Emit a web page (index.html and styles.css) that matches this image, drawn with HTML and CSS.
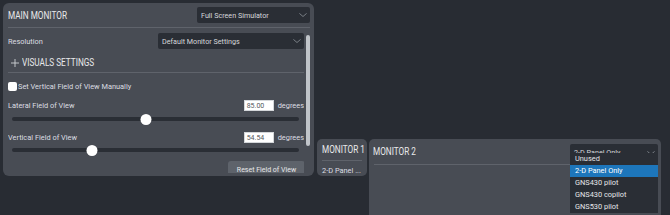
FILE: index.html
```html
<!DOCTYPE html>
<html lang="en">
<head>
<meta charset="utf-8">
<title>Monitor Configuration</title>
<link rel="stylesheet" href="styles.css">
</head>
<body>
<div class="desk">
  <section class="panel main">
    <header class="phead">
      <h1 class="ptitle">MAIN MONITOR</h1>
      <div class="select sel-mode">
        <span>Full Screen Simulator</span>
        <svg class="chev" viewBox="0 0 8 4"><path d="M0.4 0.4 L4 3.5 L7.6 0.4"/></svg>
      </div>
    </header>
    <div class="pbody">
      <div class="content">
        <div class="row res">
          <span class="label">Resolution</span>
          <div class="select sel-res">
            <span>Default Monitor Settings</span>
            <svg class="chev" viewBox="0 0 8 4"><path d="M0.4 0.4 L4 3.5 L7.6 0.4"/></svg>
          </div>
        </div>
        <div class="section">
          <svg class="plus" viewBox="0 0 8 8"><path d="M4 0 V8 M0 4 H8"/></svg>
          <h2 class="ptitle">VISUALS SETTINGS</h2>
        </div>
        <label class="check"><span class="box"></span><span>Set Vertical Field of View Manually</span></label>
        <div class="row field">
          <span class="label">Lateral Field of View</span>
          <span class="num"><span class="input">85.00</span><span>degrees</span></span>
        </div>
        <div class="slider">
          <div class="track"></div>
          <div class="thumb" style="left:46.7%"></div>
        </div>
        <div class="row field field2">
          <span class="label">Vertical Field of View</span>
          <span class="num"><span class="input">54.54</span><span>degrees</span></span>
        </div>
        <div class="slider slider2">
          <div class="track"></div>
          <div class="thumb" style="left:27.9%"></div>
        </div>
        <div class="actions"><button class="btn">Reset Field of View</button></div>
      </div>
      <div class="scrollbar"></div>
    </div>
  </section>

  <section class="panel mon1">
    <div class="mhead"><h2 class="ptitle">MONITOR 1</h2></div>
    <div class="msub">2-D Panel ...</div>
  </section>

  <section class="panel mon2">
    <div class="m2head">
      <h2 class="ptitle">MONITOR 2</h2>
      <div class="dropwrap">
        <div class="select sel-m2">
          <span>2-D Panel Only</span>
          <svg class="chev" viewBox="0 0 8 4"><path d="M0.4 0.4 L4 3.5 L7.6 0.4"/></svg>
        </div>
        <ul class="menu">
          <li>Unused</li>
          <li class="active">2-D Panel Only</li>
          <li>GNS430 pilot</li>
          <li>GNS430 copilot</li>
          <li>GNS530 pilot</li>
        </ul>
      </div>
    </div>
  </section>
</div>
</body>
</html>
```

FILE: styles.css
```css
* { box-sizing: border-box; margin: 0; padding: 0; }
html, body { width: 670px; height: 215px; overflow: hidden; }
body {
  background: #282c33;
  font-family: Roboto, "Liberation Sans", sans-serif;
  font-size: 7.4px;
  color: #dcdee2;
}
.desk { display: flex; align-items: flex-start; padding: 3px 0 0 3px; }
.panel { background: #484c54; border-radius: 6px; }

.ptitle {
  display: inline-block;
  font-size: 10px;
  font-weight: 400;
  color: #e8e9eb;
  white-space: nowrap;
  transform: scaleX(0.82);
  transform-origin: left center;
}

.select {
  background: #2a2e35;
  border-radius: 2px;
  height: 16px;
  display: flex;
  align-items: center;
  justify-content: space-between;
  padding: 0 3px 0 4px;
  font-size: 7.2px;
  color: #d6d8db;
  white-space: nowrap;
}
.chev { width: 8px; height: 4px; fill: none; stroke: #8d9299; stroke-width: 0.8; flex: none; }

/* main monitor */
.main { width: 311px; height: 173px; padding: 0 4px 3px 5px; display: flex; flex-direction: column; }
.phead {
  flex: none;
  height: 25px;
  display: flex;
  align-items: center;
  justify-content: space-between;
  border-bottom: 1px solid #5f636b;
}
.sel-mode { width: 113px; }
.pbody { flex: 1; min-height: 0; display: flex; gap: 2px; overflow: hidden; }
.content { width: 296px; flex: none; overflow: hidden; }
.scrollbar { width: 4px; height: 111px; margin-top: 7px; background: #c0c4c9; border-radius: 2px; }

.row { display: flex; align-items: center; justify-content: space-between; }
.res { margin-top: 5px; height: 16px; }
.sel-res { width: 146px; }

.section {
  margin-top: 4px;
  height: 20px;
  display: flex;
  align-items: center;
  gap: 3px;
  border-bottom: 1px solid #5f636b;
}
.plus { width: 8px; height: 8px; margin-left: 3px; fill: none; stroke: #cfd2d6; stroke-width: 0.9; flex: none; }

.check { margin-top: 9px; height: 9px; display: flex; align-items: center; gap: 1px; }
.box { width: 9px; height: 9px; background: #fff; border-radius: 2px; flex: none; }

.field { margin-top: 9px; height: 11px; }
.field2 { margin-top: 7px; }
.num { display: flex; align-items: center; gap: 4px; }
.input {
  width: 30px;
  height: 11px;
  background: #fff;
  border: 1px solid #d4d7da;
  color: #55585d;
  font-size: 7px;
  padding-left: 2px;
  display: flex;
  align-items: center;
}

.slider { position: relative; height: 12px; margin: 2px 5px 0 4px; display: flex; align-items: center; }
.slider2 { margin-top: 1px; }
.track { width: 100%; height: 4px; background: #2a2e35; border-radius: 2px; }
.thumb {
  position: absolute;
  top: 0.5px;
  width: 11px;
  height: 11px;
  border-radius: 50%;
  background: #fff;
  transform: translateX(-50%);
}

.actions { margin-top: 5px; display: flex; justify-content: flex-end; }
.btn {
  width: 77px;
  height: 18px;
  margin-right: -1px;
  background: #5e636b;
  color: #e6e7e9;
  border: none;
  border-radius: 3px;
  font-family: Roboto, "Liberation Sans", sans-serif;
  font-size: 7px;
}

/* monitor 1 */
.mon1 { width: 50px; height: 37px; margin: 136px 0 0 3px; padding: 0 5px; border-radius: 5px; }
.mhead { height: 22px; display: flex; align-items: center; border-bottom: 1px solid #5f636b; }
.msub { margin-top: 5px; line-height: 9px; white-space: nowrap; }

/* monitor 2 */
.mon2 { width: 292px; height: 110px; margin: 136px 0 0 2px; padding: 0 3px 0 4px; border-radius: 5px; }
.m2head {
  height: 26px;
  display: flex;
  align-items: center;
  justify-content: space-between;
  border-bottom: 1px solid #5f636b;
  margin-left: 1px;
}
.m2head .ptitle { margin-left: -1px; }
.dropwrap { position: relative; width: 88px; }
.sel-m2 { width: 88px; padding-top: 2px; }
.menu {
  position: absolute;
  top: 9.5px;
  left: 0;
  width: 88px;
  list-style: none;
  background: #2a2e35;
  font-size: 7.4px;
  color: #e4e6e9;
}
.menu li { height: 12px; line-height: 12px; padding-left: 5px; white-space: nowrap; }
.menu li.active { background: #1d76bb; color: #fff; }
```
